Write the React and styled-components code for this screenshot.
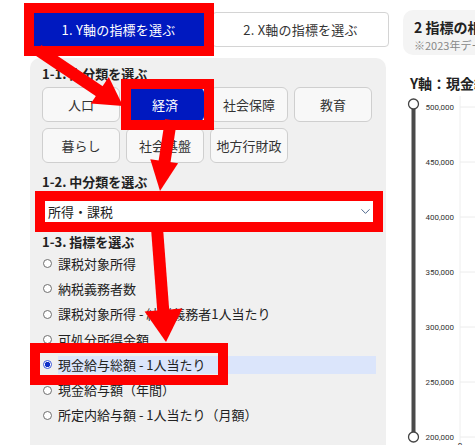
import React from 'react'
import styled, { createGlobalStyle } from 'styled-components'
import { ChevronDown } from 'lucide-react'

const GlobalStyle = createGlobalStyle`
  html, body {
    margin: 0;
    padding: 0;
    background: #fff;
    overflow: hidden;
  }
  body {
    font-family: "Noto Sans CJK JP", "Noto Sans", sans-serif;
    color: #222;
  }
`

const categories = ['人口', '経済', '社会保障', '教育', '暮らし', '社会基盤', '地方行財政']
const indicators = [
  '課税対象所得',
  '納税義務者数',
  '課税対象所得 - 納税義務者1人当たり',
  '可処分所得金額',
  '現金給与総額 - 1人当たり',
  '現金給与額（年間）',
  '所定内給与額 - 1人当たり（月額）',
]
const ticks = ['500,000', '450,000', '400,000', '350,000', '300,000', '250,000', '200,000']

export default function App() {
  return (
    <Page>
      <GlobalStyle />
      <Left>
        <Tabs>
          <Tab $active>1. Y軸の指標を選ぶ</Tab>
          <Tab>2. X軸の指標を選ぶ</Tab>
        </Tabs>
        <Panel>
          <SectionLabel>1-1. 大分類を選ぶ</SectionLabel>
          <CatGrid>
            {categories.map(c => (
              <CatButton key={c} $active={c === '経済'}>{c}</CatButton>
            ))}
          </CatGrid>
          <SectionLabel $mt={10}>1-2. 中分類を選ぶ</SectionLabel>
          <Select>
            <span>所得・課税</span>
            <ChevronDown size={15} strokeWidth={1.4} color="#34507a" />
          </Select>
          <SectionLabel $mt={9}>1-3. 指標を選ぶ</SectionLabel>
          <RadioList>
            {indicators.map(t => {
              const checked = t === '現金給与総額 - 1人当たり'
              return (
                <RadioRow key={t}>
                  <Radio $checked={checked} />
                  <RadioText $checked={checked}>{t}</RadioText>
                </RadioRow>
              )
            })}
          </RadioList>
        </Panel>
      </Left>
      <Right>
        <InfoCard>
          <InfoTitle>2 指標の相関を見る</InfoTitle>
          <InfoNote>※2023年データ</InfoNote>
        </InfoCard>
        <AxisTitle>Y軸：現金給与総額 - 1人当たり</AxisTitle>
        <svg width="80" height="352" style={{ display: 'block', overflow: 'visible' }}>
          <line x1="57" y1="0" x2="57" y2="352" stroke="#eeeeee" strokeWidth="1" />
          {ticks.map((t, i) => {
            const y = 11 + i * 55
            return (
              <g key={t}>
                <line x1="57" y1={y} x2="80" y2={y} stroke="#ececec" strokeWidth="1" />
                <text x="51" y={y + 3} fontSize="8" fill="#333" textAnchor="end" fontFamily="Roboto, sans-serif">{t}</text>
              </g>
            )
          })}
          <text x="57" y="352" fontSize="8" fill="#333" textAnchor="middle" fontFamily="Roboto, sans-serif">0</text>
          <rect x="8.5" y="8" width="4" height="333" fill="#4a4a4a" />
          <circle cx="10.5" cy="8" r="5" fill="#fff" stroke="#444" strokeWidth="1.3" />
          <circle cx="10.5" cy="341" r="5" fill="#fff" stroke="#444" strokeWidth="1.3" />
        </svg>
      </Right>

      <Annotations width="475" height="445" viewBox="0 0 475 445">
        <g fill="none" stroke="#ff0000" strokeWidth="10">
          <rect x="29" y="8" width="180" height="43" />
          <rect x="126" y="84" width="83" height="41" />
          <rect x="40" y="196" width="338" height="31" />
          <rect x="35" y="348" width="188" height="32" />
        </g>
        <g stroke="#ff0000" strokeWidth="12">
          <line x1="38" y1="50" x2="102" y2="93" />
          <line x1="171" y1="120" x2="164" y2="165" />
          <line x1="157" y1="228" x2="163.5" y2="314" />
        </g>
        <g fill="#ff0000">
          <polygon points="123,106 90.8,103.6 108.8,77" />
          <polygon points="160,191 150.3,159.3 178.1,163.3" />
          <polygon points="166,342 144.6,311.5 182.4,308.5" />
        </g>
      </Annotations>
    </Page>
  )
}

const Page = styled.div`
  position: relative;
  width: 475px;
  height: 445px;
  overflow: hidden;
  display: flex;
  align-items: flex-start;
`

const Left = styled.div`
  width: 359px;
  margin-left: 30px;
  flex-shrink: 0;
  display: flex;
  flex-direction: column;
`

const Tabs = styled.div`
  display: flex;
  gap: 5px;
  margin-top: 12px;
`

const Tab = styled.button`
  flex: 1;
  height: 35px;
  border-radius: 4px;
  border: 1px solid ${p => (p.$active ? '#0019c0' : '#d4d4d4')};
  background: ${p => (p.$active ? '#0019c0' : '#fff')};
  color: ${p => (p.$active ? '#fff' : '#333')};
  font-family: inherit;
  font-size: 13px;
  letter-spacing: 0.2px;
  padding: 0;
`

const Panel = styled.div`
  margin-top: 11px;
  width: 356px;
  height: 400px;
  box-sizing: border-box;
  background: #f0f0f0;
  border-radius: 10px 10px 0 0;
  padding: 7px 10px 0 12px;
`

const SectionLabel = styled.div`
  font-weight: 700;
  font-size: 13px;
  line-height: 18px;
  color: #222;
  margin-top: ${p => p.$mt || 0}px;
`

const CatGrid = styled.div`
  display: grid;
  grid-template-columns: repeat(4, 78px);
  grid-auto-rows: 35px;
  gap: 6px;
  margin-top: 4px;
`

const CatButton = styled.button`
  border-radius: 6px;
  border: 1px solid ${p => (p.$active ? '#0019c0' : '#cfcfcf')};
  background: ${p => (p.$active ? '#0019c0' : '#f8f8f8')};
  color: ${p => (p.$active ? '#fff' : '#333')};
  font-family: inherit;
  font-size: 13px;
  padding: 0;
`

const Select = styled.div`
  margin-top: 7px;
  height: 26px;
  box-sizing: border-box;
  background: #fff;
  border: 1px solid #cccccc;
  border-radius: 3px;
  display: flex;
  align-items: center;
  justify-content: space-between;
  padding: 0 2px 0 5px;
  font-size: 13px;
  color: #222;
`

const RadioList = styled.div`
  display: flex;
  flex-direction: column;
`

const RadioRow = styled.div`
  display: flex;
  align-items: center;
  height: 25.3px;
`

const Radio = styled.span`
  width: 9px;
  height: 9px;
  box-sizing: border-box;
  border-radius: 50%;
  margin: 0 6px 0 1px;
  flex-shrink: 0;
  border: 1px solid ${p => (p.$checked ? '#3a56d8' : '#6f6f6f')};
  background: ${p => (p.$checked ? 'radial-gradient(circle, #1030c8 0 2.6px, #fff 2.9px)' : '#fff')};
`

const RadioText = styled.span`
  flex: 1;
  font-size: 13px;
  line-height: 18px;
  color: #222;
  white-space: nowrap;
  padding-right: 12px;
  background: ${p => (p.$checked ? '#dbe5fb' : 'transparent')};
`

const Right = styled.div`
  margin-left: 14px;
  flex-shrink: 0;
  width: 140px;
  display: flex;
  flex-direction: column;
`

const InfoCard = styled.div`
  margin-top: 10px;
  height: 45px;
  box-sizing: border-box;
  background: #f4f4f4;
  border-radius: 10px;
  padding: 8px 11px 0;
  white-space: nowrap;
`

const InfoTitle = styled.div`
  font-size: 14px;
  font-weight: 700;
  line-height: 19px;
  color: #222;
`

const InfoNote = styled.div`
  font-size: 11px;
  line-height: 16px;
  color: #888;
`

const AxisTitle = styled.div`
  margin: 18px 0 3px 7px;
  font-size: 14px;
  font-weight: 700;
  line-height: 20px;
  color: #222;
  white-space: nowrap;
`

const Annotations = styled.svg`
  position: absolute;
  top: 0;
  left: 0;
  pointer-events: none;
  z-index: 10;
`
